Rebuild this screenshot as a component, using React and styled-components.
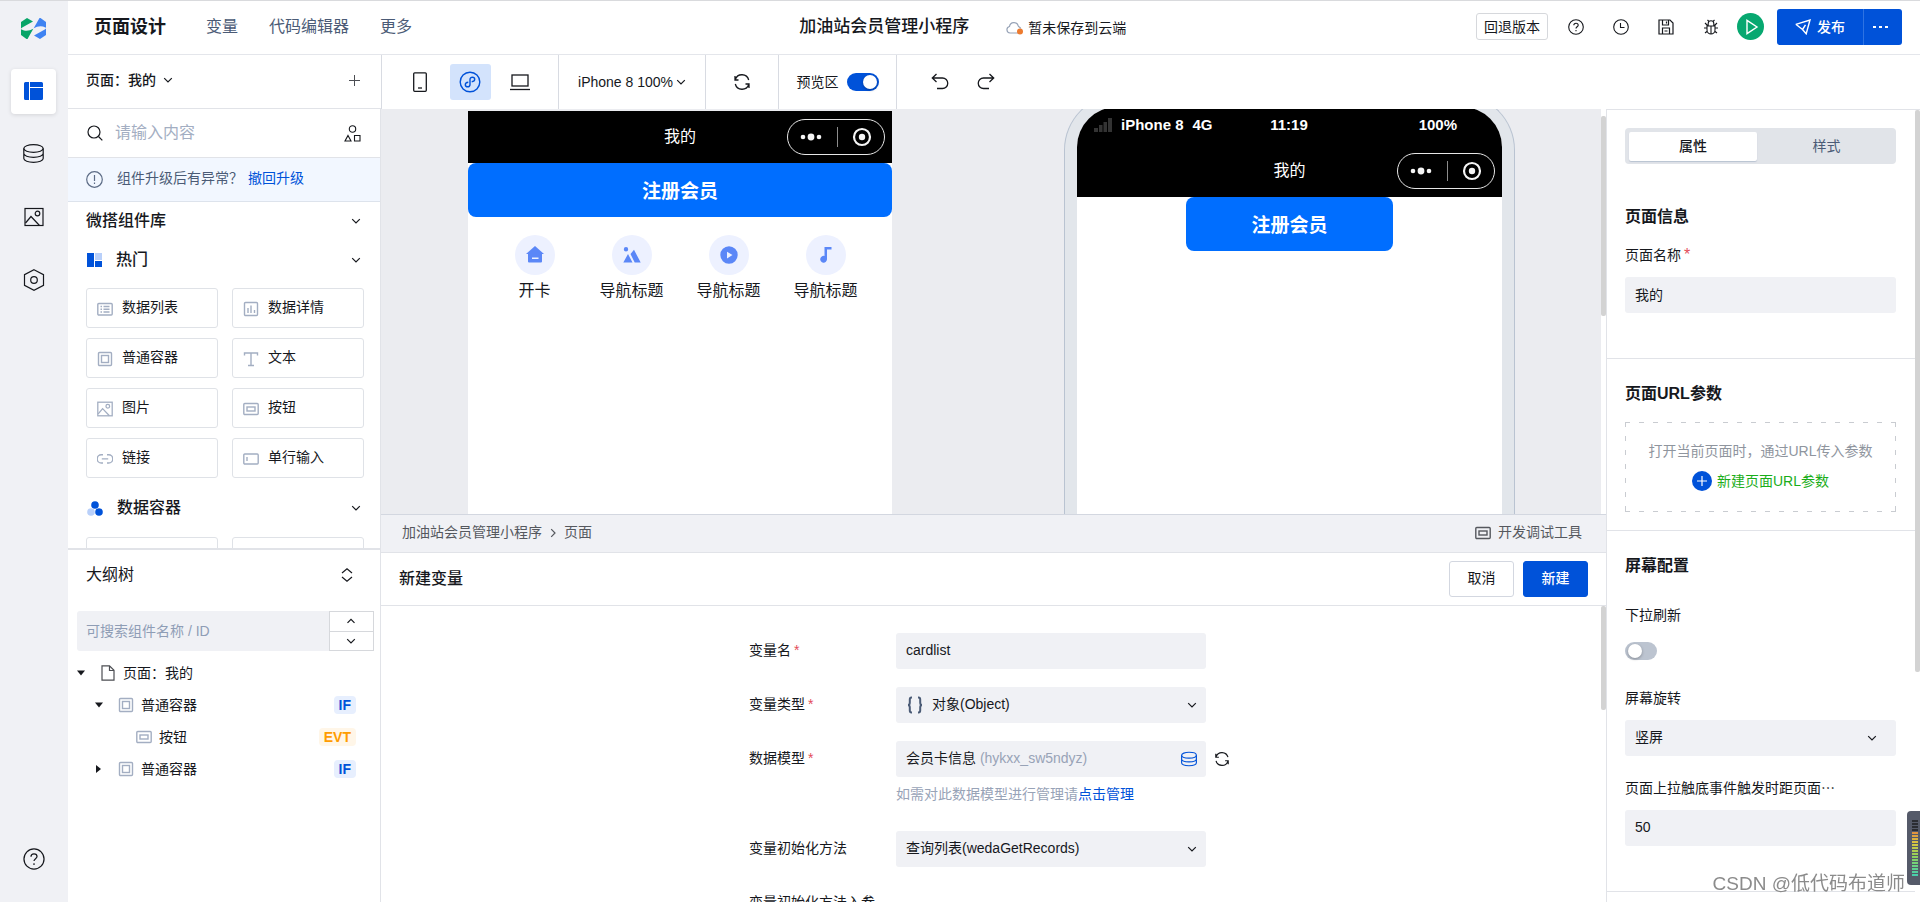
import { useState } from "react";
import styled, { createGlobalStyle } from "styled-components";

// -------------------- 全局样式 -------------------- //
const GlobalStyle = createGlobalStyle`
  * {
    box-sizing: border-box;
  }

  body {
    margin: 0;
    overflow: hidden;
    background: #fff;
    color: #16181d;
    font-family: "Liberation Sans", "Noto Sans CJK SC", sans-serif;
    font-size: 14px;
    line-height: 20px;
  }

  button, input, select {
    margin: 0;
    padding: 0;
    border: none;
    background: none;
    color: inherit;
    font: inherit;
  }

  button {
    cursor: pointer;
  }

  a {
    color: inherit;
    text-decoration: none;
  }

  svg {
    display: block;
    flex: none;
  }
`;

// -------------------- 布局 -------------------- //
const Page = styled.div`
  display: flex;
  height: 100vh;
  border-top: 1px solid #d9dadd;
`;

const SideNav = styled.nav`
  flex: none;
  width: 68px;
  display: flex;
  flex-direction: column;
  align-items: center;
  gap: 18px;
  padding: 17px 1px 20px 0;
  background: #f0f1f5;
`;

const Logo = styled.a`
  height: 33px;
`;

const SideButton = styled.button`
  flex: none;
  display: flex;
  align-items: center;
  justify-content: center;
  width: 45px;
  height: 45px;
  border-radius: 4px;
  background: ${({ $active }) => ($active ? "#fff" : "transparent")};
  box-shadow: ${({ $active }) => ($active ? "0 1px 4px rgba(0, 0, 0, 0.12)" : "none")};
  margin-top: ${({ $bottom }) => ($bottom ? "auto" : "0")};
  padding-bottom: 2px;
`;

const Main = styled.div`
  flex: 1;
  min-width: 0;
  display: flex;
  flex-direction: column;
`;

const Body = styled.div`
  flex: 1;
  min-height: 0;
  display: flex;
`;

// -------------------- 顶部 -------------------- //
const Header = styled.header`
  flex: none;
  display: grid;
  grid-template-columns: 10fr auto 11fr;
  align-items: center;
  height: 54px;
  padding: 0 18px 2px 26px;
  border-bottom: 1px solid #e4e6eb;
`;

const TopNav = styled.nav`
  display: flex;
  align-items: center;
  font-size: 16px;
  color: #4b5b76;
`;

const TopTitle = styled.h1`
  margin: 0 40px 0 0;
  font-size: 18px;
  font-weight: 700;
  color: #16181d;
`;

const TopLink = styled.a`
  margin-right: 31px;
`;

const AppName = styled.div`
  display: flex;
  align-items: center;
  gap: 37px;
  font-size: 17px;
  font-weight: 500;
`;

const SaveState = styled.span`
  display: flex;
  align-items: center;
  gap: 5px;
  padding-top: 2px;
  font-size: 14px;
  font-weight: 400;
`;

const TopActions = styled.div`
  display: flex;
  align-items: center;
  justify-content: flex-end;
`;

const RollbackButton = styled.button`
  height: 27px;
  padding: 0 7px;
  margin-right: 5px;
  border: 1px solid #d6d8dc;
  border-radius: 3px;
  line-height: 22px;
`;

const TopIcon = styled.button`
  display: flex;
  justify-content: center;
  width: 45px;
`;

const RunButton = styled.button`
  display: flex;
  align-items: center;
  justify-content: center;
  width: 27px;
  height: 27px;
  margin: 0 13px 0 4px;
  border-radius: 50%;
  background: #07a870;
`;

const PublishGroup = styled.div`
  display: flex;
  height: 36px;
  border-radius: 3px;
  overflow: hidden;
  background: #0052d9;
  color: #fff;
`;

const PublishButton = styled.button`
  display: flex;
  align-items: center;
  justify-content: center;
  gap: 6px;
  width: ${({ $small }) => ($small ? "39px" : "86px")};
  padding-right: ${({ $small }) => ($small ? "6px" : "0")};
  border-left: ${({ $small }) => ($small ? "1px solid #2e73e2" : "none")};
  font-weight: 500;
`;

// -------------------- 工具栏 -------------------- //
const ToolbarRow = styled.div`
  flex: none;
  display: flex;
  height: 54px;
`;

const PageSwitcher = styled.div`
  flex: none;
  display: flex;
  align-items: center;
  justify-content: space-between;
  width: 313px;
  padding: 0 21px 3px 18px;
  border-bottom: 1px solid #e1e3e8;
`;

const PageButton = styled.button`
  display: flex;
  align-items: center;
  gap: 7px;
  font-weight: 500;
`;

const ToolGroup = styled.div`
  display: flex;
  align-items: center;
  justify-content: center;
  gap: ${({ $gap }) => $gap || 0}px;
  width: ${({ $width }) => $width}px;
  border-left: 1px solid #d8dbe2;
`;

const DeviceButton = styled.button`
  display: flex;
  align-items: center;
  justify-content: center;
  width: 41px;
  height: 36px;
  border-radius: 3px;
  background: ${({ $active }) => ($active ? "#d3e3fc" : "transparent")};
`;

const ToolButton = styled.button`
  display: flex;
  align-items: center;
  gap: 3px;
`;

const ToolLabel = styled.label`
  display: flex;
  align-items: center;
  gap: 8px;
`;

const Switch = styled.input.attrs({ type: "checkbox", role: "switch" })`
  appearance: none;
  flex: none;
  display: block;
  width: 32px;
  height: 18px;
  padding: 2px 3px;
  border-radius: 9px;
  background: #bcc4d0;
  cursor: pointer;

  &::before {
    content: "";
    display: block;
    width: 14px;
    height: 14px;
    border-radius: 50%;
    background: #fff;
    box-shadow: 0 1px 3px rgba(0, 0, 0, 0.3);
  }

  &:checked {
    background: #0052d9;
  }

  &:checked::before {
    margin-left: 13px;
  }
`;

// -------------------- 组件库 -------------------- //
const LeftPanel = styled.aside`
  flex: none;
  display: flex;
  flex-direction: column;
  width: 313px;
  border-right: 1px solid #e1e3e8;
`;

const SearchRow = styled.div`
  flex: none;
  display: flex;
  align-items: center;
  gap: 12px;
  height: 49px;
  padding: 0 19px;
  border-bottom: 1px solid #e1e3e8;
`;

const SearchInput = styled.input`
  flex: 1;
  min-width: 0;
  outline: none;
  font-size: 16px;

  &::placeholder {
    color: #a3aec2;
  }
`;

const Notice = styled.div`
  flex: none;
  display: flex;
  align-items: center;
  height: 44px;
  padding: 0 18px 4px;
  border-bottom: 1px solid #dde3ec;
  background: #f2f7ff;
  color: #4b5b76;

  svg {
    margin: 4px 14px 0 0;
  }

  a {
    margin-left: 5px;
    color: #0052d9;
  }
`;

const Library = styled.div`
  flex: 1;
  min-height: 0;
  overflow: hidden;
`;

const SectionToggle = styled.button`
  display: flex;
  align-items: center;
  width: 100%;
  height: ${({ $height }) => $height}px;
  padding: 0 19px 0 18px;
  font-size: 16px;
  font-weight: 500;

  svg:first-child {
    margin: 0 14px 0 1px;
  }

  svg:last-child {
    margin: 0 0 0 auto;
  }
`;

const ComponentGrid = styled.div`
  display: grid;
  grid-template-columns: 1fr 1fr;
  gap: 10px 14px;
  padding: 8px 16px 9px 18px;
`;

const ComponentCard = styled.button`
  display: flex;
  align-items: center;
  gap: 9px;
  height: 40px;
  padding: 0 10px 2px;
  border: 1px solid #dfe2e7;
  border-radius: 3px;

  svg {
    margin-top: 3px;
  }
`;

// -------------------- 大纲树 -------------------- //
const Outline = styled.section`
  flex: none;
  height: 354px;
  border-top: 2px solid #e1e3e8;
`;

const OutlineHeader = styled.div`
  display: flex;
  align-items: center;
  justify-content: space-between;
  height: 50px;
  padding: 0 26px 0 18px;
`;

const OutlineTitle = styled.h2`
  margin: 0;
  font-size: 16px;
  font-weight: 400;
`;

const OutlineSearch = styled.div`
  display: flex;
  height: 40px;
  margin: 11px 6px 6px 9px;
`;

const OutlineInput = styled.input`
  flex: 1;
  min-width: 0;
  padding: 0 9px;
  border-radius: 3px 0 0 3px;
  background: #f0f1f5;
  outline: none;

  &::placeholder {
    color: #8f9db5;
  }
`;

const Stepper = styled.div`
  display: flex;
  flex-direction: column;
  width: 45px;
  border: 1px solid #d6d8dc;
`;

const StepButton = styled.button`
  flex: 1;
  display: flex;
  align-items: center;
  justify-content: center;
  padding-right: 2px;

  & + & {
    border-top: 1px solid #d6d8dc;
  }
`;

const Tree = styled.ul`
  margin: 0;
  padding: 0;
  list-style: none;
`;

const TreeItem = styled.li`
  display: flex;
  align-items: center;
  height: 32px;
  padding: 0 24px 0 ${({ $level }) => 9 + $level * 18}px;
`;

const Caret = styled.button`
  display: flex;
  width: 16px;
  margin-right: 7px;
`;

const NodeName = styled.span`
  margin-left: 7px;
  line-height: 28px;
`;

const NodeTag = styled.span`
  margin-left: auto;
  padding: 1px 5px 0;
  border-radius: 4px;
  font-size: 14px;
  font-weight: 700;
  line-height: 17px;
  color: ${({ $type }) => ($type === "EVT" ? "#ff9c00" : "#0052d9")};
  background: ${({ $type }) => ($type === "EVT" ? "#fff6e8" : "#e7effe")};
`;

// -------------------- 画布 -------------------- //
const Center = styled.main`
  flex: 1;
  min-width: 0;
  display: flex;
  flex-direction: column;
`;

const CanvasArea = styled.section`
  flex: 1;
  min-height: 0;
  display: flex;
`;

const Canvas = styled.div`
  flex: 1;
  display: flex;
  justify-content: space-between;
  padding: 0 86px 0 87px;
  overflow: hidden;
  background: #ebecf0;
`;

const ScrollTrack = styled.div`
  flex: none;
  width: 5px;
  padding-top: ${({ $top }) => $top}px;
`;

const ScrollThumb = styled.div`
  height: ${({ $length }) => $length}px;
  border-radius: 2px;
  background: #d3d3d3;
`;

const EditScreen = styled.div`
  width: 424px;
  margin-top: 2px;
  background: #fff;
`;

const PhoneFrame = styled.div`
  width: 451px;
  margin-top: -15px;
  padding: 12px 12px 0;
  border: 1px solid #b9c3d1;
  border-bottom: none;
  border-radius: 56px 56px 0 0;
  background: #e2e6eb;
`;

const PhoneScreen = styled.div`
  height: 100%;
  border-radius: 40px 40px 0 0;
  overflow: hidden;
  background: #fff;
`;

const StatusBar = styled.div`
  display: grid;
  grid-template-columns: 1fr auto 1fr;
  align-items: center;
  height: 38px;
  padding: 0 45px 2px 17px;
  background: #000;
  color: #fff;
  font-size: 15px;
  font-weight: 700;
`;

const Carrier = styled.span`
  display: flex;
  align-items: center;
  gap: 9px;
`;

const BatteryText = styled.span`
  text-align: right;
`;

const ClockText = styled.span`
  padding-left: 27px;
`;

const MiniBar = styled.div`
  display: grid;
  grid-template-columns: 1fr auto 1fr;
  align-items: center;
  height: 52px;
  padding: 0 7px;
  background: #000;
  color: #fff;
  font-size: 16px;
`;

const MiniTitle = styled.span`
  grid-column: 2;
`;

const Capsule = styled.span`
  justify-self: end;
  display: flex;
  align-items: center;
  justify-content: space-between;
  width: 98px;
  height: 36px;
  padding: 0 12px;
  border: 1px solid #e6e6e6;
  border-radius: 18px;
`;

const CapsuleLine = styled.i`
  width: 1px;
  height: 20px;
  background: #8c8c8c;
`;

const RegisterButton = styled.button`
  display: block;
  width: ${({ $width }) => $width};
  height: 54px;
  margin: 0 auto;
  padding-top: 3px;
  border-radius: 8px;
  background: #006eff;
  color: #fff;
  font-size: 19px;
  font-weight: 700;
`;

const GridNav = styled.div`
  display: grid;
  grid-template-columns: repeat(4, 1fr);
  padding: 18px;
`;

const GridItem = styled.a`
  display: flex;
  flex-direction: column;
  align-items: center;
  gap: 4px;
  font-size: 16px;
  line-height: 24px;
`;

const GridIcon = styled.span`
  display: flex;
  align-items: center;
  justify-content: center;
  width: 40px;
  height: 40px;
  border-radius: 50%;
  background: #edf1ff;
`;

const Crumbs = styled.div`
  flex: none;
  display: flex;
  align-items: center;
  gap: 6px;
  height: 39px;
  padding: 0 24px 4px 21px;
  border-top: 1px solid #d3d7e0;
  border-bottom: 1px solid #e1e3e8;
  background: #f0f1f5;
  color: #55585e;

  svg {
    margin-top: 3px;
  }
`;

const DebugButton = styled.button`
  display: flex;
  align-items: center;
  gap: 7px;
  margin-left: auto;
`;

// -------------------- 新建变量 -------------------- //
const VariablePanel = styled.section`
  flex: none;
  display: flex;
  flex-direction: column;
  height: 349px;
`;

const VariableHeader = styled.div`
  flex: none;
  display: flex;
  align-items: center;
  gap: 9px;
  height: 53px;
  padding: 0 18px;
  border-bottom: 1px solid #e1e3e8;
`;

const VariableTitle = styled.h2`
  flex: 1;
  margin: 0;
  font-size: 16px;
  font-weight: 500;
`;

const ActionButton = styled.button`
  width: 65px;
  height: 36px;
  padding-bottom: 2px;
  border: 1px solid ${({ $primary }) => ($primary ? "#0052d9" : "#d3d7e0")};
  border-radius: 3px;
  background: ${({ $primary }) => ($primary ? "#0052d9" : "#fff")};
  color: ${({ $primary }) => ($primary ? "#fff" : "#16181d")};
  font-weight: ${({ $primary }) => ($primary ? 500 : 400)};
`;

const VariableBody = styled.div`
  flex: 1;
  min-height: 0;
  display: flex;
  overflow: hidden;
`;

const Form = styled.form`
  width: 484px;
  margin: 0 auto;
  padding-top: 27px;
`;

const FormRow = styled.div`
  display: grid;
  grid-template-columns: 147px 310px 1fr;
  grid-auto-rows: 36px;
  align-items: center;
  margin-bottom: 18px;
`;

const FormLabel = styled.label`
  padding-bottom: 2px;
  white-space: nowrap;
`;

const Required = styled.span`
  margin-left: 3px;
  color: #e34d59;
  font-size: ${({ $large }) => ($large ? "16px" : "14px")};
`;

const Field = styled.div`
  display: flex;
  align-items: center;
  gap: 8px;
  height: 36px;
  padding: 0 ${({ $end }) => $end || 9}px 0 10px;
  border-radius: 3px;
  background: #f0f1f5;
`;

const FieldInput = styled.input`
  flex: 1;
  min-width: 0;
  height: 36px;
  padding-bottom: 2px;
  outline: none;
`;

const FieldSelect = styled.select`
  flex: 1;
  min-width: 0;
  height: 36px;
  appearance: none;
  outline: none;
  padding-bottom: 2px;
`;

const ModelButton = styled.button`
  flex: 1;
  padding-bottom: 2px;
  text-align: left;

  span {
    color: #98a3b7;
  }
`;

const IconButton = styled.button`
  display: flex;
  margin-left: 8px;
`;

const Helper = styled.p`
  grid-column: 2 / 4;
  margin: 0;
  padding-bottom: 2px;
  color: #98a3b7;

  a {
    color: #0052d9;
  }
`;

// -------------------- 属性面板 -------------------- //
const RightPanel = styled.aside`
  flex: none;
  display: flex;
  width: 314px;
  border-top: 1px solid #e1e3e8;
  border-left: 1px solid #e1e3e8;
  overflow: hidden;
`;

const Settings = styled.div`
  flex: 1;
  min-width: 0;
`;

const Tabs = styled.div`
  display: grid;
  grid-template-columns: 128px 1fr;
  height: 36px;
  margin: 18px 19px 18px 18px;
  padding: 4px 0 3px 4px;
  border-radius: 4px;
  background: #e1e4e9;
`;

const Tab = styled.button`
  padding-bottom: 2px;
  border-radius: 2px;
  background: ${({ $active }) => ($active ? "#fff" : "transparent")};
  color: ${({ $active }) => ($active ? "#16181d" : "#4b5b76")};
  font-weight: ${({ $active }) => ($active ? 500 : 400)};
  box-shadow: ${({ $active }) => ($active ? "0 1px 1px #b9c3d1" : "none")};
`;

const SettingGroup = styled.section`
  padding: 23px 19px ${({ $bottom }) => $bottom}px 18px;
  border-bottom: 1px solid #e1e3e8;
`;

const GroupTitle = styled.h3`
  margin: 0 0 16px;
  font-size: 16px;
  font-weight: 600;
  line-height: 24px;
`;

const SettingLabel = styled.label`
  display: block;
  margin: ${({ $top }) => $top || 0}px 0 12px;
  line-height: 20px;
  overflow: hidden;
  white-space: nowrap;
  text-overflow: ellipsis;
`;

const SwitchRow = styled.div`
  padding: 5px 0;
`;

const ParamBox = styled.div`
  display: flex;
  flex-direction: column;
  align-items: center;
  gap: 10px;
  padding: 19px 0 21px;
  color: #8f959e;
  background:
    repeating-linear-gradient(90deg, #c9ccd1 0 5px, transparent 5px 14px) top / 100% 1px no-repeat,
    repeating-linear-gradient(90deg, #c9ccd1 0 5px, transparent 5px 14px) bottom / 100% 1px no-repeat,
    repeating-linear-gradient(#c9ccd1 0 5px, transparent 5px 14px) left / 1px 100% no-repeat,
    repeating-linear-gradient(#c9ccd1 0 5px, transparent 5px 14px) right / 1px 100% no-repeat;
`;

const AddParam = styled.button`
  display: flex;
  align-items: center;
  gap: 5px;
  color: #1aad19;
`;

// -------------------- 悬浮内容 -------------------- //
const Watermark = styled.div`
  position: fixed;
  right: 15px;
  bottom: 4px;
  font-size: 19px;
  line-height: 28px;
  color: #8b8b8b;
`;

const Meter = styled.div`
  position: fixed;
  right: 0;
  bottom: 17px;
  width: 13px;
  height: 74px;
  padding: 9px 2px 9px 5px;
  border-radius: 4px 0 0 4px;
  background: #555a69;
`;

const MeterBars = styled.div`
  height: 100%;
  background:
    repeating-linear-gradient(transparent 0 2px, #555a69 2px 3px),
    linear-gradient(#2b2d33 0 20%, #e0913f 22%, #d9c840 42%, #8fd25c 65%, #45cfae 100%);
`;

// -------------------- 图标 -------------------- //
function Icon({ size = 16, color = "#16181d", width = 1.2, box = 16, children }) {
  return (
    <svg width={size} height={size} viewBox={`0 0 ${box} ${box}`} fill="none" stroke={color} strokeWidth={width} aria-hidden="true">
      {children}
    </svg>
  );
}

const muted = "#a3aec2";

const Chevron = ({ up, size = 10 }) => (
  <Icon size={size} box={10} width={1.2}>
    <path d={up ? "M1.500 6.800 5 3.300 8.500 6.800" : "M1.200 3.200 5 7 8.800 3.200"} />
  </Icon>
);

const CrumbArrow = () => (
  <Icon size={10} box={10} color="#55585e" width={1.2}>
    <path d="M3.200 1.200 7 5 3.200 8.800" />
  </Icon>
);

const LogoIcon = () => (
  <svg width="25" height="21" viewBox="0 0 25 21" aria-hidden="true">
    <g fill="#07a568">
      <path d="M0 4 6 0l6 3.500L3 8.500Q1 9.500 0 10.500z" />
      <path d="M0 11.300 3 12.600Q8 13.500 12.300 10.800L6.500 21H5.500L0 17z" />
    </g>
    <g fill="#3f83f2" transform="rotate(180 12.500 10.500)">
      <path d="M0 4 6 0l6 3.500L3 8.500Q1 9.500 0 10.500z" />
      <path d="M0 11.300 3 12.600Q8 13.500 12.300 10.800L6.500 21H5.500L0 17z" />
    </g>
  </svg>
);

const LayoutIcon = () => (
  <svg width="19" height="18" viewBox="0 0 19 18" fill="#0052d9" aria-hidden="true">
    <path d="M1.500 0H5v18H1.500Q0 18 0 16.500V1.500Q0 0 1.500 0zM6 0h11.500Q19 0 19 1.500V5H6zM6 6h13v10.500Q19 18 17.500 18H6z" />
  </svg>
);

const DatabaseIcon = ({ size = 21, color = "#16181d", width = 1.2 }) => (
  <Icon size={size} box={21} color={color} width={width}>
    <ellipse cx="10.500" cy="5.500" rx="9.700" ry="3.800" />
    <path d="M.8 5.500v10c0 2.100 4.300 3.800 9.700 3.800s9.700-1.700 9.700-3.800v-10M.8 10.500c0 2.100 4.300 3.800 9.700 3.800s9.700-1.700 9.700-3.800" />
  </Icon>
);

const ImageIcon = ({ size = 20, color = "#16181d" }) => (
  <Icon size={size} box={20} color={color} width={size > 16 ? 1.2 : 1.6}>
    <rect x="1" y="1.500" width="18" height="17" />
    <circle cx="13.500" cy="6.500" r="2.300" />
    <path d="M1.500 16 7 9.500l8.500 9" />
  </Icon>
);

const HexIcon = () => (
  <Icon size={22} box={22} width={1.2}>
    <path d="M11 .8 20.500 5.700v10.600L11 21.200 1.500 16.300V5.700z" />
    <circle cx="11" cy="11" r="3.300" />
  </Icon>
);

const HelpIcon = ({ size = 16 }) => (
  <Icon size={size} box={16} width={size > 16 ? 0.9 : 1.1}>
    <circle cx="8" cy="8" r="7.300" />
    <path d="M5.800 6.300c0-1.300 1-2.100 2.200-2.100s2.200.8 2.200 2c0 1.500-2.200 1.700-2.200 3.300M8 11v1.300" />
  </Icon>
);

const ClockIcon = () => (
  <Icon width={1.1}>
    <circle cx="8" cy="8" r="7.300" />
    <path d="M7.500 4v4.500h4" />
  </Icon>
);

const SaveIcon = () => (
  <Icon width={1.2}>
    <path d="M1 1h11l3 3v11H1zM4.500 1v5h6V1M4.500 15V9h7v6M6.500 12h3M8.500 2.500v2" />
  </Icon>
);

const BugIcon = () => (
  <Icon width={1.1}>
    <path d="M4 7h8v4a4 4 0 0 1-8 0zM5.200 7V4.500a2.800 2.800 0 0 1 5.600 0V7M8 7v8M1 9h3M12 9h3M2 4l2.500 2.500M14 4l-2.500 2.500M2 14l2.500-2M14 14l-2.500-2M4.500 1l1.500 1.500M11.500 1 10 2.500" />
  </Icon>
);

const PlayIcon = () => (
  <Icon size={16} color="#fff" width={1.4}>
    <path d="M4 1.300 14 8 4 14.700z" />
  </Icon>
);

const SendIcon = () => (
  <Icon size={16} color="#fff" width={1.4}>
    <path d="M.8 5.300 15 1l-3.800 13.800-3.700-4.300L.8 5.300M7.500 10.500 10.500 5.800" />
  </Icon>
);

const MoreIcon = () => (
  <svg width="16" height="4" viewBox="0 0 16 4" fill="#fff" aria-hidden="true">
    <rect x="1" y="1" width="3" height="2" />
    <rect x="7" y="1" width="3" height="2" />
    <rect x="13" y="1" width="3" height="2" />
  </svg>
);

const CloudIcon = () => (
  <svg width="17" height="14" viewBox="0 0 17 14" fill="none" aria-hidden="true">
    <path d="M12 12H4a3.300 3.300 0 0 1-.5-6.500 4.500 4.500 0 0 1 8.800-.5c.5 1 1.700 1.200 2.400 2.500" stroke="#97a3b7" strokeWidth="1.200" />
    <circle cx="14" cy="10.500" r="3" fill="#ed7b2f" />
  </svg>
);

const PlusIcon = () => (
  <svg width="11" height="11" viewBox="0 0 11 11" fill="#4c4e53" aria-hidden="true">
    <path d="M5 0h1v11H5zM0 5h11v1H0z" />
  </svg>
);

const PhoneIcon = () => (
  <Icon size={20} box={20} width={1.3}>
    <rect x="3.700" y=".8" width="12.600" height="18.500" rx="1" />
    <path d="M8 16h4" />
  </Icon>
);

const MiniAppIcon = () => (
  <Icon size={22} box={22} color="#0052d9" width={1.4}>
    <circle cx="11" cy="11" r="9.800" />
    <path d="M9.300 11.200c-1.700.2-3 1.200-3 2.500 0 1.200 1 2.100 2.300 2.100s2.400-.9 2.400-2.400V8.600c0-1.500 1.100-2.400 2.400-2.400s2.300.9 2.300 2.100c0 1.300-1.300 2.300-3 2.500" />
  </Icon>
);

const LaptopIcon = () => (
  <Icon size={20} box={20} width={1.3}>
    <rect x="2" y="3" width="16" height="11" />
    <path d="M0 17.500h20" />
  </Icon>
);

const RefreshIcon = ({ size = 18 }) => (
  <Icon size={size} box={18} width={1.3}>
    <path d="M2.300 6.500A7 7 0 0 1 15.700 7M15.700 11.500A7 7 0 0 1 2.300 11M2 3v4h3.500M16 15v-4h-3.500" />
  </Icon>
);

const UndoIcon = ({ redo }) => (
  <Icon size={18} box={18} width={1.3}>
    <path d={redo ? "M16.500 5H6.500a5 5 0 0 0 0 10.500H12M12.500 1 16.700 5l-4.200 4" : "M1.500 5h10a5 5 0 0 1 0 10.500H6M5.500 1 1.300 5l4.200 4"} />
  </Icon>
);

const SearchIcon = () => (
  <Icon width={1.2}>
    <circle cx="7" cy="7" r="6" />
    <path d="m11.500 11.500 3.800 3.800" />
  </Icon>
);

const ShapesIcon = () => (
  <Icon size={17} box={17} width={1.1}>
    <circle cx="8.500" cy="4" r="3.200" />
    <path d="M4 10.500 7 16H1zM10.500 10.500h5.500V16h-5.500z" />
  </Icon>
);

const InfoIcon = () => (
  <Icon size={17} box={17} color="#5d6c86">
    <circle cx="8.500" cy="8.500" r="7.800" />
    <path d="M8.500 4v6M8.500 11.500V13" />
  </Icon>
);

const HotIcon = () => (
  <svg width="15" height="14" viewBox="0 0 15 14" aria-hidden="true">
    <path fill="#0052d9" d="M0 0h7v14H0zM8 8h7v6H8z" />
    <path fill="#b9d0fa" d="M8 0h7v7H8z" />
  </svg>
);

const DotsIcon = () => (
  <svg width="16" height="15" viewBox="0 0 16 15" aria-hidden="true">
    <circle cx="8" cy="4" r="3.800" fill="#0052d9" />
    <circle cx="4" cy="11" r="3.800" fill="#b9d0fa" />
    <circle cx="12" cy="11" r="3.800" fill="#0052d9" />
  </svg>
);

// 组件卡片和大纲树共用
const componentIcons = {
  list: <><rect x=".8" y="2.500" width="14.400" height="11.500" rx="1" /><path d="M3.500 5.500H5M6.500 5.500h6M3.500 8.200H5M6.500 8.200h6M3.500 11H5M6.500 11h6" /></>,
  detail: <><rect x="1.500" y="1.500" width="13" height="13" rx="1" /><path d="M5 7v5M8 4.500V12M11.500 9v3" /></>,
  container: <><rect x="1.500" y="1.500" width="13" height="13" rx="1" /><rect x="4.500" y="4.500" width="7" height="7" /></>,
  text: <path d="M1.500 4.500V2h13v2.500M8 2v12.500M5 14.500h6" />,
  button: <><rect x=".8" y="2.500" width="14.400" height="11" rx="1" /><rect x="4" y="6" width="8" height="4" /></>,
  link: <path d="M6 3.800H4.300a4 4 0 0 0 0 8.200H6M10 3.800h1.700a4 4 0 0 1 0 8.200H10M4.800 7.900h6.400" />,
  input: <><rect x=".8" y="3" width="14.400" height="10" rx="1" /><path d="M4 6v4" /></>,
};

const ComponentIcon = ({ name, color = muted }) =>
  name === "image" ? (
    <ImageIcon size={16} color={color} />
  ) : (
    <Icon color={color} width={1.4}>{componentIcons[name]}</Icon>
  );

const FileIcon = () => (
  <Icon size={16} color="#4c4e53">
    <path d="M2 .8h7.500L14 5.300v9.900H2zM9.500 1v4.500H14" />
  </Icon>
);

const CaretIcon = ({ open }) => (
  <svg width="8" height="8" viewBox="0 0 8 8" fill="#16181d" aria-hidden="true">
    <path d={open ? "M0 1.500h8L4 6.500z" : "M1 0v8l5-4z"} />
  </svg>
);

const SortIcon = () => (
  <Icon size={14} box={14}>
    <path d="M2 5 7 .8 12 5M2 9l5 4.200L12 9" />
  </Icon>
);

const SignalIcon = () => (
  <svg width="18" height="14" viewBox="0 0 18 14" fill="#333" aria-hidden="true">
    <path d="M0 10h4v4H0zM5 7h3.500v7H5zM9.500 4H13v10H9.500zM14 0h4v14h-4z" />
  </svg>
);

const CapsuleDots = () => (
  <svg width="22" height="8" viewBox="0 0 22 8" fill="#f5f5f5" aria-hidden="true">
    <circle cx="3" cy="4" r="2.300" />
    <circle cx="11" cy="4" r="3.400" />
    <circle cx="19" cy="4" r="2.300" />
  </svg>
);

const CapsuleRing = () => (
  <Icon size={20} box={20} color="#f5f5f5" width={2.2}>
    <circle cx="10" cy="10" r="8" />
    <circle cx="10" cy="10" r="3.200" fill="#f5f5f5" stroke="none" />
  </Icon>
);

const BracesIcon = () => (
  <Icon size={18} box={18} color="#4b5b76" width={2}>
    <path d="M6 1.500H5.500Q3.800 1.500 3.800 3.500v3Q3.800 9 2 9q1.800 0 1.800 2.500v3q0 2 1.700 2H6M12 1.500h.5q1.700 0 1.700 2v3Q14.200 9 16 9q-1.800 0-1.800 2.500v3q0 2-1.700 2H12" />
  </Icon>
);

const AddIcon = () => (
  <svg width="20" height="20" viewBox="0 0 20 20" fill="none" aria-hidden="true">
    <circle cx="10" cy="10" r="10" fill="#0052d9" />
    <path d="M10 5v10M5 10h10" stroke="#fff" strokeWidth="1.200" />
  </svg>
);

const navIcons = {
  home: <path fillRule="evenodd" d="M9 0 18 8h-2v7.500q0 1-1 1H3q-1 0-1-1V8H0zM6 11.500V13h6.500v-1.500z" />,
  mountain: <path d="M3 1a2.200 2.200 0 1 1 0 4.400A2.200 2.200 0 0 1 3 1zM.3 16.500 5 8l4.500 8.500zM7.500 8 11 3.800l6.700 12.700h-6z" />,
  play: <path fillRule="evenodd" d="M9 .3a8.700 8.700 0 1 1 0 17.400A8.700 8.700 0 0 1 9 .3zM7 5.800v6.600L12.500 9z" />,
  music: <path d="M7.500 1H14.500v2.500h-4.500v9.800A3.400 3.400 0 1 1 7.500 10z" />,
};

const NavIcon = ({ name }) => (
  <svg width="18" height="18" viewBox="0 0 18 18" fill="#5b87f7" aria-hidden="true">
    {navIcons[name]}
  </svg>
);

// -------------------- 数据 -------------------- //
const components = [
  { name: "数据列表", icon: "list" },
  { name: "数据详情", icon: "detail" },
  { name: "普通容器", icon: "container" },
  { name: "文本", icon: "text" },
  { name: "图片", icon: "image" },
  { name: "按钮", icon: "button" },
  { name: "链接", icon: "link" },
  { name: "单行输入", icon: "input" },
];

const tree = [
  { id: 1, name: "普通容器", icon: "container", level: 1, open: true, tag: "IF" },
  { id: 2, name: "按钮", icon: "button", level: 2, tag: "EVT" },
  { id: 3, name: "普通容器", icon: "container", level: 1, open: false, tag: "IF" },
];

const navItems = [
  { title: "开卡", icon: "home" },
  { title: "导航标题", icon: "mountain" },
  { title: "导航标题", icon: "play" },
  { title: "导航标题", icon: "music" },
];

// -------------------- 组件 -------------------- //
function MiniHeader() {
  return (
    <MiniBar>
      <MiniTitle>我的</MiniTitle>
      <Capsule>
        <CapsuleDots />
        <CapsuleLine />
        <CapsuleRing />
      </Capsule>
    </MiniBar>
  );
}

function TopBar() {
  return (
    <Header>
      <TopNav>
        <TopTitle>页面设计</TopTitle>
        <TopLink href="#variables">变量</TopLink>
        <TopLink href="#code">代码编辑器</TopLink>
        <TopLink href="#more">更多</TopLink>
      </TopNav>
      <AppName>
        加油站会员管理小程序
        <SaveState><CloudIcon />暂未保存到云端</SaveState>
      </AppName>
      <TopActions>
        <RollbackButton>回退版本</RollbackButton>
        <TopIcon aria-label="帮助"><HelpIcon /></TopIcon>
        <TopIcon aria-label="历史"><ClockIcon /></TopIcon>
        <TopIcon aria-label="保存"><SaveIcon /></TopIcon>
        <TopIcon aria-label="调试"><BugIcon /></TopIcon>
        <RunButton aria-label="预览"><PlayIcon /></RunButton>
        <PublishGroup>
          <PublishButton><SendIcon />发布</PublishButton>
          <PublishButton $small aria-label="更多"><MoreIcon /></PublishButton>
        </PublishGroup>
      </TopActions>
    </Header>
  );
}

function Toolbar({ preview, onPreview }) {
  return (
    <ToolbarRow>
      <PageSwitcher>
        <PageButton>页面：我的<Chevron /></PageButton>
        <button aria-label="新建页面"><PlusIcon /></button>
      </PageSwitcher>
      <ToolGroup $width={177} $gap={9}>
        <DeviceButton aria-label="手机"><PhoneIcon /></DeviceButton>
        <DeviceButton $active aria-label="小程序"><MiniAppIcon /></DeviceButton>
        <DeviceButton aria-label="电脑"><LaptopIcon /></DeviceButton>
      </ToolGroup>
      <ToolGroup $width={147}>
        <ToolButton>iPhone 8 100%<Chevron /></ToolButton>
      </ToolGroup>
      <ToolGroup $width={73}>
        <ToolButton aria-label="刷新"><RefreshIcon /></ToolButton>
      </ToolGroup>
      <ToolGroup $width={118}>
        <ToolLabel>
          预览区
          <Switch checked={preview} onChange={(e) => onPreview(e.target.checked)} />
        </ToolLabel>
      </ToolGroup>
      <ToolGroup $width={132} $gap={28}>
        <ToolButton aria-label="撤销"><UndoIcon /></ToolButton>
        <ToolButton aria-label="重做"><UndoIcon redo /></ToolButton>
      </ToolGroup>
    </ToolbarRow>
  );
}

function ComponentPanel() {
  return (
    <LeftPanel>
      <SearchRow>
        <SearchIcon />
        <SearchInput placeholder="请输入内容" aria-label="搜索组件" />
        <button aria-label="组件管理"><ShapesIcon /></button>
      </SearchRow>
      <Notice>
        <InfoIcon />
        组件升级后有异常？
        <a href="#rollback">撤回升级</a>
      </Notice>
      <Library>
        <SectionToggle $height={38}><span>微搭组件库</span><Chevron /></SectionToggle>
        <SectionToggle $height={40}><HotIcon />热门<Chevron /></SectionToggle>
        <ComponentGrid>
          {components.map((c) => (
            <ComponentCard key={c.name}>
              <ComponentIcon name={c.icon} />
              {c.name}
            </ComponentCard>
          ))}
        </ComponentGrid>
        <SectionToggle $height={42}><DotsIcon />数据容器<Chevron /></SectionToggle>
        <ComponentGrid>
          <ComponentCard aria-label="数据容器" />
          <ComponentCard aria-label="数据容器" />
        </ComponentGrid>
      </Library>
      <Outline>
        <OutlineHeader>
          <OutlineTitle>大纲树</OutlineTitle>
          <button aria-label="展开"><SortIcon /></button>
        </OutlineHeader>
        <OutlineSearch>
          <OutlineInput placeholder="可搜索组件名称 / ID" aria-label="搜索大纲树" />
          <Stepper>
            <StepButton aria-label="上一个"><Chevron up /></StepButton>
            <StepButton aria-label="下一个"><Chevron /></StepButton>
          </Stepper>
        </OutlineSearch>
        <Tree>
          <TreeItem $level={0}>
            <Caret aria-label="收起"><CaretIcon open /></Caret>
            <FileIcon />
            <NodeName>页面：我的</NodeName>
          </TreeItem>
          {tree.map((n) => (
            <TreeItem key={n.id} $level={n.level}>
              <Caret as={n.open === undefined ? "span" : "button"}>
                {n.open !== undefined && <CaretIcon open={n.open} />}
              </Caret>
              <ComponentIcon name={n.icon} />
              <NodeName>{n.name}</NodeName>
              <NodeTag $type={n.tag}>{n.tag}</NodeTag>
            </TreeItem>
          ))}
        </Tree>
      </Outline>
    </LeftPanel>
  );
}

function DesignCanvas({ preview }) {
  return (
    <CanvasArea>
      <Canvas>
        <EditScreen>
          <MiniHeader />
          <RegisterButton $width="100%">注册会员</RegisterButton>
          <GridNav>
            {navItems.map((item) => (
              <GridItem key={item.icon} href="#nav">
                <GridIcon><NavIcon name={item.icon} /></GridIcon>
                {item.title}
              </GridItem>
            ))}
          </GridNav>
        </EditScreen>
        {preview && (
          <PhoneFrame>
            <PhoneScreen>
              <StatusBar>
                <Carrier>
                  <SignalIcon />
                  <span>iPhone 8</span>
                  <span>4G</span>
                </Carrier>
                <ClockText>11:19</ClockText>
                <BatteryText>100%</BatteryText>
              </StatusBar>
              <MiniHeader />
              <RegisterButton $width="207px">注册会员</RegisterButton>
            </PhoneScreen>
          </PhoneFrame>
        )}
      </Canvas>
      <ScrollTrack $top={7}><ScrollThumb $length={200} /></ScrollTrack>
    </CanvasArea>
  );
}

function VariableForm() {
  return (
    <VariablePanel>
      <VariableHeader>
        <VariableTitle>新建变量</VariableTitle>
        <ActionButton>取消</ActionButton>
        <ActionButton $primary>新建</ActionButton>
      </VariableHeader>
      <VariableBody>
        <Form>
          <FormRow>
            <FormLabel htmlFor="varName">变量名<Required>*</Required></FormLabel>
            <Field><FieldInput id="varName" defaultValue="cardlist" /></Field>
          </FormRow>
          <FormRow>
            <FormLabel htmlFor="varType">变量类型<Required>*</Required></FormLabel>
            <Field>
              <BracesIcon />
              <FieldSelect id="varType"><option>对象(Object)</option></FieldSelect>
              <Chevron />
            </Field>
          </FormRow>
          <FormRow>
            <FormLabel htmlFor="model">数据模型<Required>*</Required></FormLabel>
            <Field>
              <ModelButton id="model" type="button">会员卡信息 <span>(hykxx_sw5ndyz)</span></ModelButton>
              <DatabaseIcon size={16} color="#0052d9" width={1.5} />
            </Field>
            <IconButton type="button" aria-label="刷新模型"><RefreshIcon size={16} /></IconButton>
            <Helper>如需对此数据模型进行管理请<a href="#model">点击管理</a></Helper>
          </FormRow>
          <FormRow>
            <FormLabel htmlFor="initMethod">变量初始化方法</FormLabel>
            <Field>
              <FieldSelect id="initMethod"><option>查询列表(wedaGetRecords)</option></FieldSelect>
              <Chevron />
            </Field>
          </FormRow>
          <FormRow>
            <FormLabel>变量初始化方法入参</FormLabel>
          </FormRow>
        </Form>
        <ScrollTrack $top={0}><ScrollThumb $length={104} /></ScrollTrack>
      </VariableBody>
    </VariablePanel>
  );
}

function PropertyPanel() {
  const [tab, setTab] = useState("属性");

  return (
    <RightPanel>
      <Settings>
        <Tabs>
          {["属性", "样式"].map((t) => (
            <Tab key={t} $active={tab === t} onClick={() => setTab(t)}>{t}</Tab>
          ))}
        </Tabs>
        <SettingGroup $bottom={45}>
          <GroupTitle>页面信息</GroupTitle>
          <SettingLabel htmlFor="pageName">页面名称<Required $large>*</Required></SettingLabel>
          <Field><FieldInput id="pageName" defaultValue="我的" /></Field>
        </SettingGroup>
        <SettingGroup $bottom={18}>
          <GroupTitle>页面URL参数</GroupTitle>
          <ParamBox>
            打开当前页面时，通过URL传入参数
            <AddParam><AddIcon />新建页面URL参数</AddParam>
          </ParamBox>
        </SettingGroup>
        <SettingGroup $bottom={45}>
          <GroupTitle>屏幕配置</GroupTitle>
          <SettingLabel htmlFor="pullRefresh" $top={27}>下拉刷新</SettingLabel>
          <SwitchRow><Switch id="pullRefresh" /></SwitchRow>
          <SettingLabel htmlFor="rotate" $top={23}>屏幕旋转</SettingLabel>
          <Field $end={19}>
            <FieldSelect id="rotate"><option>竖屏</option></FieldSelect>
            <Chevron />
          </Field>
          <SettingLabel htmlFor="distance" $top={22}>页面上拉触底事件触发时距页面⋯</SettingLabel>
          <Field><FieldInput id="distance" defaultValue="50" /></Field>
        </SettingGroup>
      </Settings>
      <ScrollTrack $top={0}><ScrollThumb $length={562} /></ScrollTrack>
    </RightPanel>
  );
}

export default function App() {
  const [preview, setPreview] = useState(true);

  return (
    <>
      <GlobalStyle />
      <Page>
        <SideNav>
          <Logo href="#home" aria-label="微搭"><LogoIcon /></Logo>
          <SideButton $active aria-label="页面设计"><LayoutIcon /></SideButton>
          <SideButton aria-label="数据源"><DatabaseIcon /></SideButton>
          <SideButton aria-label="素材"><ImageIcon /></SideButton>
          <SideButton aria-label="设置"><HexIcon /></SideButton>
          <SideButton $bottom aria-label="帮助"><HelpIcon size={22} /></SideButton>
        </SideNav>
        <Main>
          <TopBar />
          <Toolbar preview={preview} onPreview={setPreview} />
          <Body>
            <ComponentPanel />
            <Center>
              <DesignCanvas preview={preview} />
              <Crumbs>
                <span>加油站会员管理小程序</span>
                <CrumbArrow />
                <span>页面</span>
                <DebugButton><ComponentIcon name="button" color="#55585e" />开发调试工具</DebugButton>
              </Crumbs>
              <VariableForm />
            </Center>
            <PropertyPanel />
          </Body>
        </Main>
      </Page>
      <Watermark>CSDN @低代码布道师</Watermark>
      <Meter><MeterBars /></Meter>
    </>
  );
}
